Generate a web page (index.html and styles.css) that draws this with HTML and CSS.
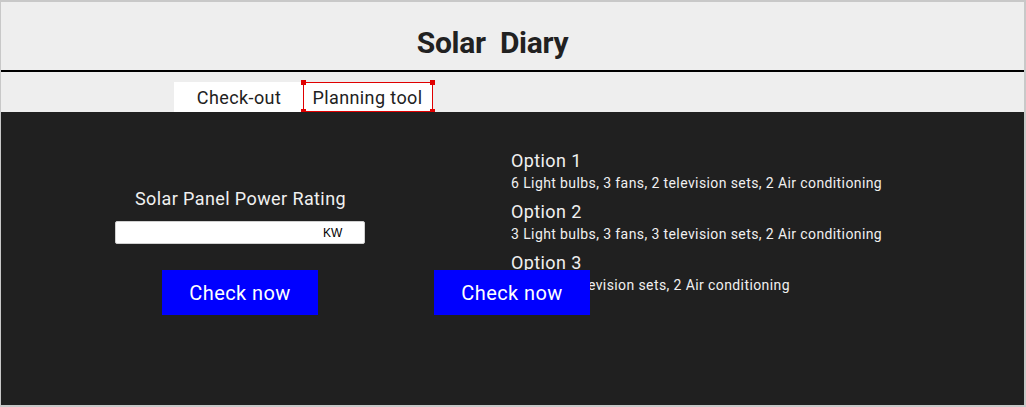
FILE: index.html
```html
<!DOCTYPE html>
<html>
<head>
<meta charset="utf-8">
<link rel="stylesheet" href="styles.css">
</head>
<body>
<div class="frame">
  <header class="header"><h1 class="title">Solar&nbsp;&nbsp;Diary</h1></header>
  <div class="rule"></div>
  <nav class="tabs">
    <div class="tab">Check-out</div>
    <div class="tab tab-selected">Planning tool
      <span class="handle h-tl"></span><span class="handle h-tr"></span>
      <span class="handle h-bl"></span><span class="handle h-br"></span>
    </div>
  </nav>
  <main class="main">
    <section class="left">
      <div class="label">Solar Panel Power Rating</div>
      <div class="input"><span class="unit">KW</span></div>
      <div class="btn">Check now</div>
    </section>
    <section class="right">
      <div class="option">
        <div class="opt-title">Option 1</div>
        <div class="opt-desc">6 Light bulbs, 3 fans, 2 television sets, 2 Air conditioning</div>
      </div>
      <div class="option">
        <div class="opt-title">Option 2</div>
        <div class="opt-desc">3 Light bulbs, 3 fans, 3 television sets, 2 Air conditioning</div>
      </div>
      <div class="option">
        <div class="opt-title">Option 3</div>
        <div class="opt-desc">3 fans, 2 television sets, 2 Air conditioning</div>
      </div>
    </section>
    <div class="btn btn-float">Check now</div>
  </main>
</div>
</body>
</html>
```
FILE: styles.css
```css
html, body {
  margin: 0;
  padding: 0;
}
body {
  font-family: Roboto, "Noto Sans", sans-serif;
  letter-spacing: 0.025em;
  background: #c8c8c8;
}
.frame {
  box-sizing: border-box;
  width: 1026px;
  height: 407px;
  border-top: 2px solid #c8c8c8;
  border-left: 1px solid #c8c8c8;
  border-right: 2px solid #c8c8c8;
  border-bottom: 2px solid #c8c8c8;
  display: flex;
  flex-direction: column;
  background: #eeeeee;
}
.header {
  height: 68px;
  box-sizing: border-box;
  padding-top: 23px;
  padding-right: 40px;
  background: #eeeeee;
}
.title {
  margin: 0;
  text-align: center;
  font-size: 30px;
  line-height: 35px;
  font-weight: 700;
  letter-spacing: -0.3px;
  color: #212121;
}
.rule {
  height: 2px;
  background: #000;
}
.tabs {
  height: 40px;
  box-sizing: border-box;
  padding-top: 10px;
  padding-left: 173px;
  display: flex;
  background: #eeeeee;
}
.tab {
  position: relative;
  height: 30px;
  background: #fff;
  color: #212121;
  font-size: 18px;
  line-height: 21px;
  display: flex;
  align-items: center;
  justify-content: center;
  box-sizing: border-box;
}
.tab:first-child {
  width: 129px;
  padding-left: 1px;
}
.tab-selected {
  width: 130px;
  border: 1px solid #e00000;
  padding-right: 1px;
}
.handle {
  position: absolute;
  width: 5px;
  height: 5px;
  background: #e00000;
}
.h-tl { left: -3px; top: -3px; }
.h-tr { right: -3px; top: -3px; }
.h-bl { left: -3px; bottom: -3px; }
.h-br { right: -3px; bottom: -3px; }
.main {
  position: relative;
  flex: 1;
  background: #202020;
  display: flex;
}
.left {
  width: 478px;
  display: flex;
  flex-direction: column;
  align-items: center;
  padding-top: 76px;
}
.label {
  font-size: 18px;
  line-height: 21px;
  color: #f0f0f0;
  padding-left: 1px;
}
.input {
  margin-top: 12px;
  width: 250px;
  height: 23px;
  box-sizing: border-box;
  background: #fff;
  border: 1px solid #d0d0d0;
  border-radius: 2px;
  padding-left: 207px;
  display: flex;
  align-items: center;
}
.unit {
  font-family: "Liberation Sans", Arial, sans-serif;
  font-size: 12px;
  letter-spacing: 0;
  color: #000;
  padding-top: 1px;
}
.btn {
  width: 156px;
  height: 45px;
  background: #0000ff;
  color: #fff;
  font-size: 20px;
  display: flex;
  align-items: center;
  justify-content: center;
}
.left .btn {
  margin-top: 26px;
}
.btn-float {
  position: absolute;
  left: 433px;
  top: 158px;
}
.right {
  padding-left: 32px;
  padding-top: 38px;
  color: #f0f0f0;
}
.option {
  margin-bottom: 10px;
}
.opt-title {
  font-size: 18px;
  line-height: 21px;
}
.opt-desc {
  margin-top: 4px;
  font-size: 14px;
  line-height: 16px;
}
```
